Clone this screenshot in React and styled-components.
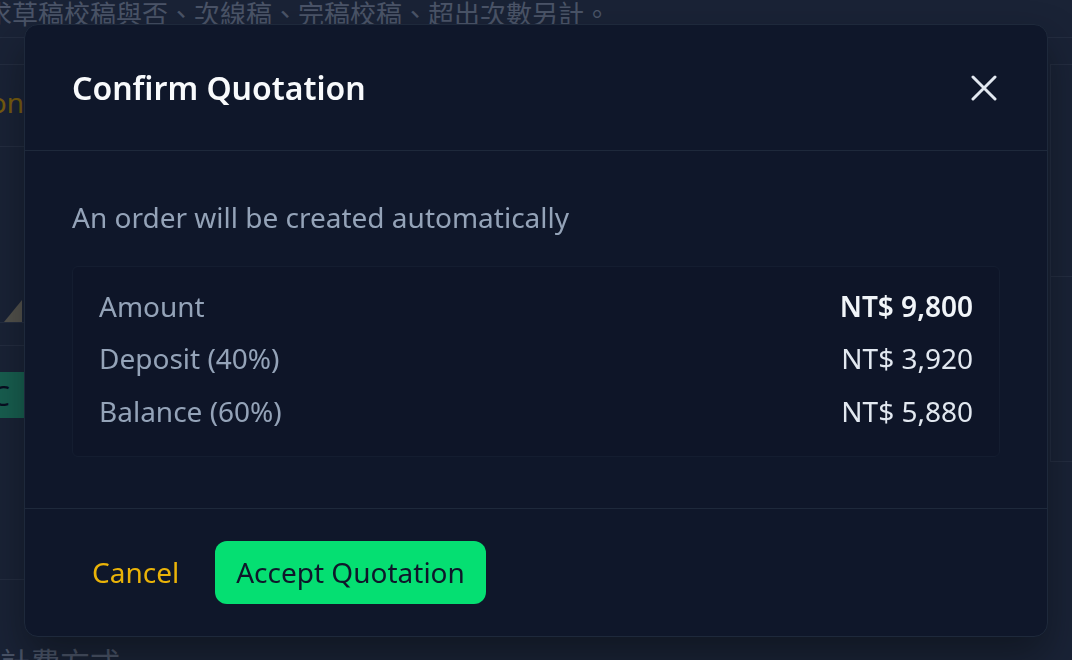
import React from "react";
import styled, { createGlobalStyle } from "styled-components";

const GlobalStyle = createGlobalStyle`
  html, body {
    margin: 0;
    padding: 0;
    background: #334155;
    font-family: "Noto Sans", "Noto Sans CJK TC", sans-serif;
  }
  * { box-sizing: border-box; }
`;

const Page = styled.div`
  width: 1072px;
  height: 660px;
  overflow: hidden;
  display: flex;
  flex-direction: column;
  background: #334155;
  color: #94a3b8;
`;

const TopNote = styled.div`
  height: 38px;
  flex-shrink: 0;
  font-size: 26px;
  line-height: 28px;
  white-space: nowrap;
  overflow: hidden;
  border-bottom: 1px solid #475569;
  text-indent: -14px;
`;

const Columns = styled.div`
  flex: 1;
  min-height: 0;
  display: flex;
  align-items: flex-start;
  justify-content: space-between;
  padding-top: 26px;
`;

const SidePane = styled.div`
  width: ${(p) => p.$width}px;
  flex-shrink: 0;
  display: flex;
  flex-direction: column;
  border-top: 1px solid #475569;
  border-left: ${(p) => (p.$right ? "1px solid #475569" : "none")};
`;

const SideRow = styled.div`
  height: ${(p) => p.$h}px;
  flex-shrink: 0;
  display: flex;
  align-items: ${(p) => p.$align || "center"};
  justify-content: flex-end;
  padding-bottom: ${(p) => p.$lift || 0}px;
  overflow: hidden;
  white-space: nowrap;
  border-bottom: ${(p) => (p.$line ? "1px solid #475569" : "none")};
  font-size: 28px;
  color: ${(p) => p.$color || "#94a3b8"};
`;

const Corner = styled.div`
  width: 0;
  height: 0;
  border-left: 18px solid transparent;
  border-bottom: 22px solid #a49e80;
  margin-right: 2px;
`;

const GhostButton = styled.div`
  height: 46px;
  padding: 0 14px;
  display: flex;
  align-items: center;
  background: #2fb888;
  color: #0f172a;
  font-size: 28px;
`;

const BottomNote = styled.div`
  flex-shrink: 0;
  margin-top: 68px;
  font-size: 30px;
  line-height: 30px;
  white-space: nowrap;
  color: #94a3b8;
`;

const Overlay = styled.div`
  position: fixed;
  inset: 0;
  display: flex;
  align-items: center;
  justify-content: center;
  padding: 24px;
  background: rgba(2, 6, 23, 0.5);
`;

const Modal = styled.div`
  width: 100%;
  background: #0f172a;
  border: 1px solid #1e293b;
  border-radius: 14px;
  box-shadow: 0 20px 40px rgba(0, 0, 0, 0.35);
  display: flex;
  flex-direction: column;
`;

const Header = styled.div`
  display: flex;
  align-items: center;
  justify-content: space-between;
  padding: 39px 47px 38px;
  border-bottom: 1px solid #1e293b;
`;

const Title = styled.h2`
  margin: 0;
  font-size: 32px;
  line-height: 48px;
  font-weight: 600;
  color: #f8fafc;
`;

const CloseButton = styled.button`
  width: 32px;
  height: 32px;
  padding: 0;
  border: none;
  background: transparent;
  color: #e2e8f0;
  display: flex;
  align-items: center;
  justify-content: center;
  cursor: pointer;
`;

const Body = styled.div`
  padding: 45px 47px 51px;
  border-bottom: 1px solid #1e293b;
`;

const Lead = styled.p`
  margin: 0 0 28px;
  font-size: 28px;
  line-height: 42px;
  color: #94a3b8;
`;

const Summary = styled.div`
  display: flex;
  flex-direction: column;
  gap: 10.5px;
  padding: 18px 26px 24px;
  background: rgba(2, 6, 23, 0.06);
  border: 1px solid #141d30;
  border-radius: 6px;
`;

const SummaryRow = styled.div`
  display: flex;
  justify-content: space-between;
  font-size: 28px;
  line-height: 42px;
`;

const Label = styled.span`
  color: #94a3b8;
`;

const Value = styled.span`
  color: ${(p) => (p.$strong ? "#f1f5f9" : "#e2e8f0")};
  font-weight: ${(p) => (p.$strong ? 600 : 400)};
`;

const Footer = styled.div`
  display: flex;
  align-items: center;
  gap: 16px;
  padding: 32px 47px 32px;
`;

const TextButton = styled.button`
  height: 63px;
  padding: 0 20px;
  border: none;
  background: transparent;
  font-family: inherit;
  font-size: 28px;
  color: #eab308;
  cursor: pointer;
`;

const PrimaryButton = styled.button`
  height: 63px;
  padding: 0 21px;
  border: none;
  border-radius: 12px;
  background: #05df72;
  font-family: inherit;
  font-size: 28px;
  color: #0f172a;
  cursor: pointer;
`;

const rows = [
  { label: "Amount", value: "NT$ 9,800", strong: true },
  { label: "Deposit (40%)", value: "NT$ 3,920" },
  { label: "Balance (60%)", value: "NT$ 5,880" },
];

function CloseIcon() {
  return (
    <svg width="26" height="26" viewBox="0 0 26 26" fill="none">
      <path
        d="M2 2 24 24M24 2 2 24"
        stroke="currentColor"
        strokeWidth="3"
        strokeLinecap="round"
      />
    </svg>
  );
}

export default function App() {
  return (
    <>
      <GlobalStyle />
      <Page>
        <TopNote>求草稿校稿與否、次線稿、完稿校稿、超出次數另計。</TopNote>
        <Columns>
          <SidePane $width={24}>
            <SideRow $h={82} $line $lift={8} $color="#eab308">
              Quotation
            </SideRow>
            <SideRow $h={176} $line $align="flex-end">
              <Corner />
            </SideRow>
            <SideRow $h={23} $line />
            <SideRow $h={98}>
              <GhostButton>Accept C</GhostButton>
            </SideRow>
            <SideRow $h={136} $line />
            <BottomNote>計費方式</BottomNote>
          </SidePane>
          <SidePane $width={22} $right>
            <SideRow $h={212} $line />
            <SideRow $h={185} $line />
          </SidePane>
        </Columns>
      </Page>
      <Overlay>
        <Modal role="dialog" aria-label="Confirm Quotation">
          <Header>
            <Title>Confirm Quotation</Title>
            <CloseButton aria-label="Close">
              <CloseIcon />
            </CloseButton>
          </Header>
          <Body>
            <Lead>An order will be created automatically</Lead>
            <Summary>
              {rows.map((r) => (
                <SummaryRow key={r.label}>
                  <Label>{r.label}</Label>
                  <Value $strong={r.strong}>{r.value}</Value>
                </SummaryRow>
              ))}
            </Summary>
          </Body>
          <Footer>
            <TextButton>Cancel</TextButton>
            <PrimaryButton>Accept Quotation</PrimaryButton>
          </Footer>
        </Modal>
      </Overlay>
    </>
  );
}
